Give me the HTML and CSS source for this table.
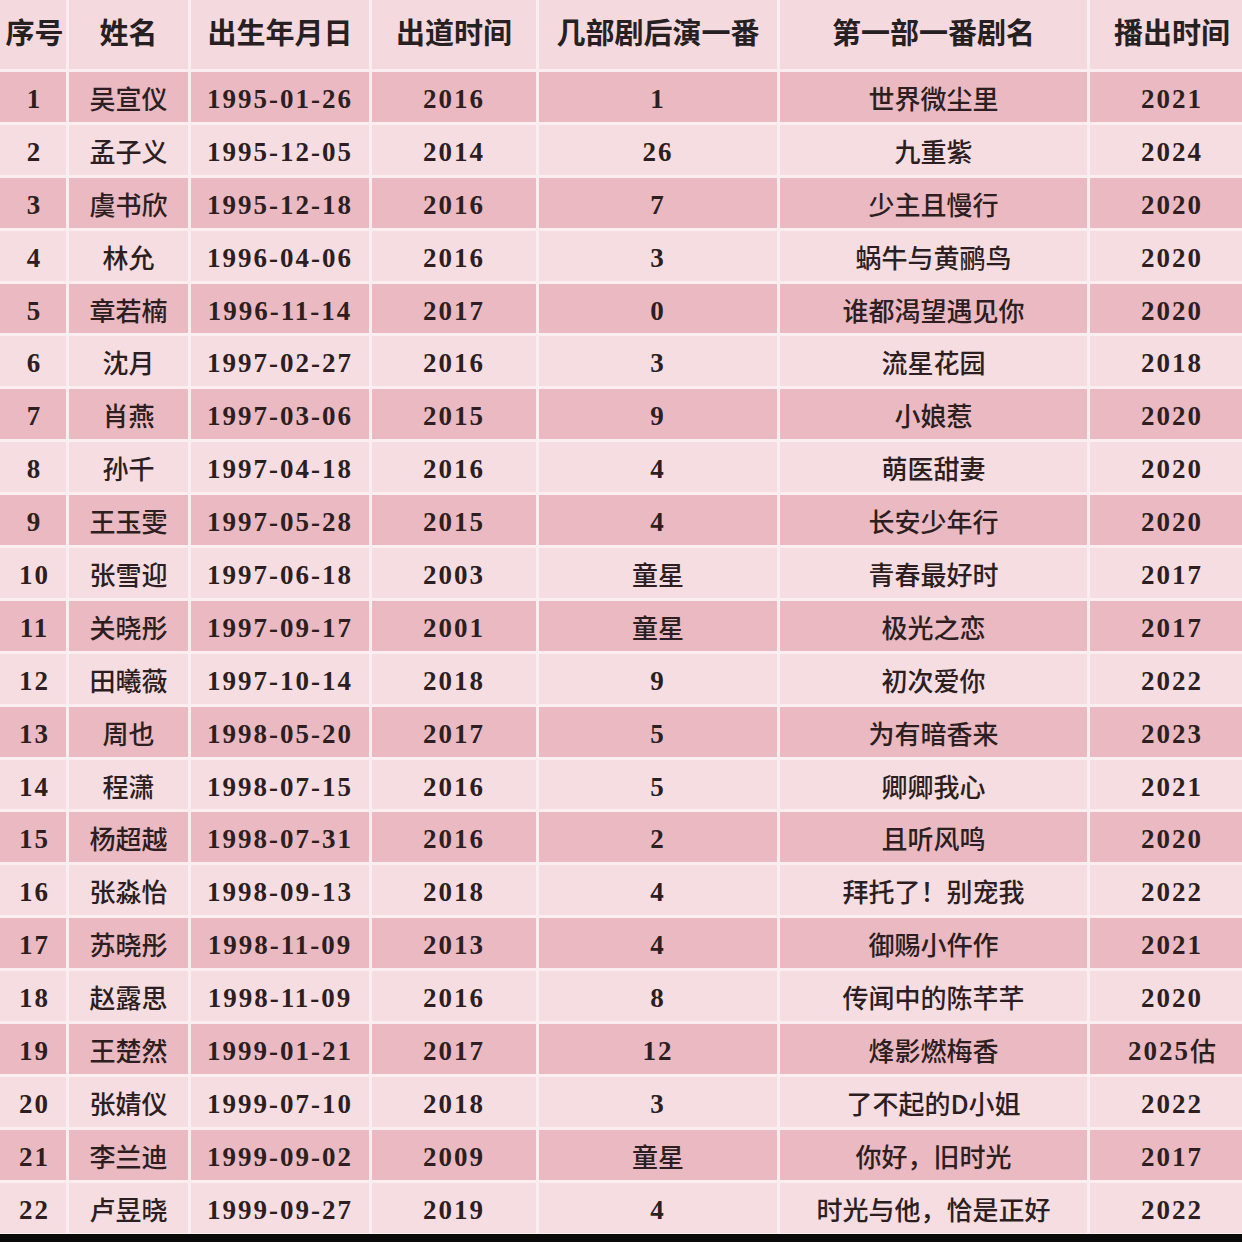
FILE: index.html
```html
<!DOCTYPE html>
<html lang="zh-CN">
<head>
<meta charset="utf-8">
<title>表</title>
<link rel="stylesheet" href="styles.css">
</head>
<body>
<div class="table">
  <div class="row head">
    <div class="cell">序号</div><div class="cell">姓名</div><div class="cell">出生年月日</div><div class="cell">出道时间</div><div class="cell">几部剧后演一番</div><div class="cell">第一部一番剧名</div><div class="cell">播出时间</div>
  </div>
  <div class="row dark"><div class="cell num">1</div><div class="cell zh">吴宣仪</div><div class="cell num">1995-01-26</div><div class="cell num">2016</div><div class="cell num">1</div><div class="cell zh">世界微尘里</div><div class="cell num">2021</div></div>
  <div class="row light"><div class="cell num">2</div><div class="cell zh">孟子义</div><div class="cell num">1995-12-05</div><div class="cell num">2014</div><div class="cell num">26</div><div class="cell zh">九重紫</div><div class="cell num">2024</div></div>
  <div class="row dark"><div class="cell num">3</div><div class="cell zh">虞书欣</div><div class="cell num">1995-12-18</div><div class="cell num">2016</div><div class="cell num">7</div><div class="cell zh">少主且慢行</div><div class="cell num">2020</div></div>
  <div class="row light"><div class="cell num">4</div><div class="cell zh">林允</div><div class="cell num">1996-04-06</div><div class="cell num">2016</div><div class="cell num">3</div><div class="cell zh">蜗牛与黄鹂鸟</div><div class="cell num">2020</div></div>
  <div class="row dark"><div class="cell num">5</div><div class="cell zh">章若楠</div><div class="cell num">1996-11-14</div><div class="cell num">2017</div><div class="cell num">0</div><div class="cell zh">谁都渴望遇见你</div><div class="cell num">2020</div></div>
  <div class="row light"><div class="cell num">6</div><div class="cell zh">沈月</div><div class="cell num">1997-02-27</div><div class="cell num">2016</div><div class="cell num">3</div><div class="cell zh">流星花园</div><div class="cell num">2018</div></div>
  <div class="row dark"><div class="cell num">7</div><div class="cell zh">肖燕</div><div class="cell num">1997-03-06</div><div class="cell num">2015</div><div class="cell num">9</div><div class="cell zh">小娘惹</div><div class="cell num">2020</div></div>
  <div class="row light"><div class="cell num">8</div><div class="cell zh">孙千</div><div class="cell num">1997-04-18</div><div class="cell num">2016</div><div class="cell num">4</div><div class="cell zh">萌医甜妻</div><div class="cell num">2020</div></div>
  <div class="row dark"><div class="cell num">9</div><div class="cell zh">王玉雯</div><div class="cell num">1997-05-28</div><div class="cell num">2015</div><div class="cell num">4</div><div class="cell zh">长安少年行</div><div class="cell num">2020</div></div>
  <div class="row light"><div class="cell num">10</div><div class="cell zh">张雪迎</div><div class="cell num">1997-06-18</div><div class="cell num">2003</div><div class="cell zh">童星</div><div class="cell zh">青春最好时</div><div class="cell num">2017</div></div>
  <div class="row dark"><div class="cell num">11</div><div class="cell zh">关晓彤</div><div class="cell num">1997-09-17</div><div class="cell num">2001</div><div class="cell zh">童星</div><div class="cell zh">极光之恋</div><div class="cell num">2017</div></div>
  <div class="row light"><div class="cell num">12</div><div class="cell zh">田曦薇</div><div class="cell num">1997-10-14</div><div class="cell num">2018</div><div class="cell num">9</div><div class="cell zh">初次爱你</div><div class="cell num">2022</div></div>
  <div class="row dark"><div class="cell num">13</div><div class="cell zh">周也</div><div class="cell num">1998-05-20</div><div class="cell num">2017</div><div class="cell num">5</div><div class="cell zh">为有暗香来</div><div class="cell num">2023</div></div>
  <div class="row light"><div class="cell num">14</div><div class="cell zh">程潇</div><div class="cell num">1998-07-15</div><div class="cell num">2016</div><div class="cell num">5</div><div class="cell zh">卿卿我心</div><div class="cell num">2021</div></div>
  <div class="row dark"><div class="cell num">15</div><div class="cell zh">杨超越</div><div class="cell num">1998-07-31</div><div class="cell num">2016</div><div class="cell num">2</div><div class="cell zh">且听风鸣</div><div class="cell num">2020</div></div>
  <div class="row light"><div class="cell num">16</div><div class="cell zh">张淼怡</div><div class="cell num">1998-09-13</div><div class="cell num">2018</div><div class="cell num">4</div><div class="cell zh">拜托了！别宠我</div><div class="cell num">2022</div></div>
  <div class="row dark"><div class="cell num">17</div><div class="cell zh">苏晓彤</div><div class="cell num">1998-11-09</div><div class="cell num">2013</div><div class="cell num">4</div><div class="cell zh">御赐小仵作</div><div class="cell num">2021</div></div>
  <div class="row light"><div class="cell num">18</div><div class="cell zh">赵露思</div><div class="cell num">1998-11-09</div><div class="cell num">2016</div><div class="cell num">8</div><div class="cell zh">传闻中的陈芊芊</div><div class="cell num">2020</div></div>
  <div class="row dark"><div class="cell num">19</div><div class="cell zh">王楚然</div><div class="cell num">1999-01-21</div><div class="cell num">2017</div><div class="cell num">12</div><div class="cell zh">烽影燃梅香</div><div class="cell num">2025<span class="zh">估</span></div></div>
  <div class="row light"><div class="cell num">20</div><div class="cell zh">张婧仪</div><div class="cell num">1999-07-10</div><div class="cell num">2018</div><div class="cell num">3</div><div class="cell zh">了不起的D小姐</div><div class="cell num">2022</div></div>
  <div class="row dark"><div class="cell num">21</div><div class="cell zh">李兰迪</div><div class="cell num">1999-09-02</div><div class="cell num">2009</div><div class="cell zh">童星</div><div class="cell zh">你好，旧时光</div><div class="cell num">2017</div></div>
  <div class="row light"><div class="cell num">22</div><div class="cell zh">卢昱晓</div><div class="cell num">1999-09-27</div><div class="cell num">2019</div><div class="cell num">4</div><div class="cell zh">时光与他，恰是正好</div><div class="cell num">2022</div></div>
</div>
</body>
</html>
```
FILE: styles.css
```css
html, body {
  margin: 0;
  padding: 0;
  background: #0a0a0a;
}
body {
  width: 1242px;
  height: 1242px;
  overflow: hidden;
}
.table {
  display: flex;
  flex-direction: column;
  gap: 3px;
  background: #fbeef1;
  padding-bottom: 1px;
}
.row {
  display: grid;
  grid-template-columns: 66px 119px 178px 164px 238px 307px 152px;
  column-gap: 3px;
  height: 49.9px;
}
.row.head {
  height: 69px;
}
.cell {
  display: flex;
  align-items: center;
  justify-content: center;
  color: #2c1e21;
  white-space: nowrap;
  box-sizing: border-box;
}
.cell:first-child { padding-left: 3px; }
.cell:last-child { padding-left: 12px; }
.head .cell {
  background: #f4d9de;
  font-family: "Noto Sans CJK SC", sans-serif;
  font-weight: 700;
  font-size: 29px;
  color: #262022;
  padding-bottom: 8px;
}
.dark .cell { background: #eab9c2; }
.light .cell { background: #f6dde2; }
.num {
  font-family: "Liberation Serif", "Noto Sans CJK SC", serif;
  font-weight: 700;
  font-size: 27px;
  letter-spacing: 2px;
  padding-top: 5px;
}
.zh {
  font-family: "Noto Sans CJK SC", sans-serif;
  font-weight: 500;
  font-size: 26px;
  letter-spacing: 0;
}
.cell.zh { padding-top: 1px; }
.num .zh { position: relative; top: -2px; }
```
